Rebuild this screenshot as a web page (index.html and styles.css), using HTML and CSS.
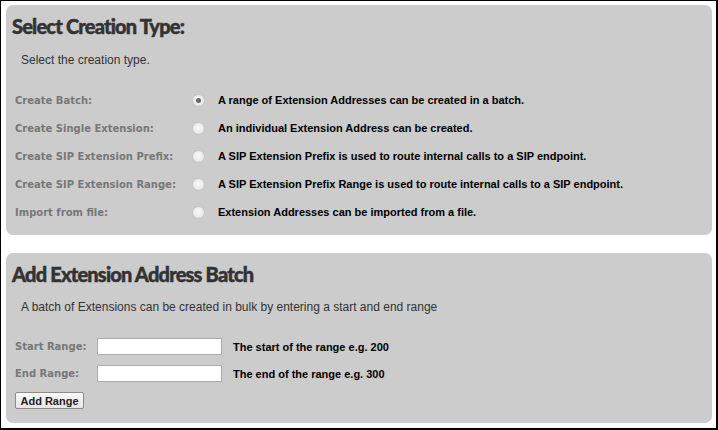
FILE: index.html
```html
<!DOCTYPE html>
<html>
<head>
<meta charset="utf-8">
<link rel="stylesheet" href="styles.css">
</head>
<body>
<div class="frame">
  <section class="panel panel-type">
    <h2 class="title">Select Creation Type:</h2>
    <p class="intro">Select the creation type.</p>
    <div class="options">
      <div class="opt">
        <span class="lbl">Create Batch:</span>
        <span class="radio checked"></span>
        <span class="desc">A range of Extension Addresses can be created in a batch.</span>
      </div>
      <div class="opt">
        <span class="lbl">Create Single Extension:</span>
        <span class="radio"></span>
        <span class="desc">An individual Extension Address can be created.</span>
      </div>
      <div class="opt">
        <span class="lbl">Create SIP Extension Prefix:</span>
        <span class="radio"></span>
        <span class="desc">A SIP Extension Prefix is used to route internal calls to a SIP endpoint.</span>
      </div>
      <div class="opt">
        <span class="lbl">Create SIP Extension Range:</span>
        <span class="radio"></span>
        <span class="desc">A SIP Extension Prefix Range is used to route internal calls to a SIP endpoint.</span>
      </div>
      <div class="opt">
        <span class="lbl">Import from file:</span>
        <span class="radio"></span>
        <span class="desc">Extension Addresses can be imported from a file.</span>
      </div>
    </div>
  </section>
  <section class="panel panel-batch">
    <h2 class="title">Add Extension Address Batch</h2>
    <p class="intro">A batch of Extensions can be created in bulk by entering a start and end range</p>
    <div class="fields">
      <div class="field">
        <span class="lbl">Start Range:</span>
        <span class="input"></span>
        <span class="desc">The start of the range e.g. 200</span>
      </div>
      <div class="field">
        <span class="lbl">End Range:</span>
        <span class="input"></span>
        <span class="desc">The end of the range e.g. 300</span>
      </div>
    </div>
    <button class="btn">Add Range</button>
  </section>
</div>
</body>
</html>
```

FILE: styles.css
```css
html, body {
  margin: 0;
  padding: 0;
  background: #fff;
}
.frame {
  box-sizing: border-box;
  width: 718px;
  height: 430px;
  border-style: solid;
  border-color: #000;
  border-width: 1px 2px 2px 1px;
  padding: 4px 4px 0 5px;
  display: flex;
  flex-direction: column;
  gap: 18px;
}
.panel {
  background: #cccccc;
  border-radius: 7px;
  box-sizing: border-box;
  padding-left: 6px;
}
.panel-type {
  height: 230px;
  padding-top: 9px;
}
.panel-batch {
  height: 170px;
  padding-top: 9px;
}
.title {
  margin: 0;
  font-family: Lato, "Open Sans", sans-serif;
  font-weight: 900;
  font-size: 20px;
  line-height: 24px;
  letter-spacing: -0.8px;
  color: #333;
  -webkit-text-stroke: 0.45px #333;
}
.intro {
  margin: 15px 0 0 9px;
  font-family: "Liberation Sans", Arial, sans-serif;
  font-size: 12px;
  line-height: 14px;
  color: #333;
}
.panel-batch .intro {
  margin-top: 14px;
}
.options {
  margin-top: 26px;
  display: flex;
  flex-direction: column;
  gap: 14px;
}
.opt {
  display: flex;
  align-items: center;
  height: 14px;
}
.lbl {
  font-family: "DejaVu Sans", Verdana, sans-serif;
  font-weight: 700;
  font-size: 10px;
  color: #777;
  padding-left: 3px;
  box-sizing: border-box;
}
.opt .lbl { width: 180px; }
.radio {
  box-sizing: border-box;
  width: 13px;
  height: 13px;
  border-radius: 50%;
  border: 1px solid #c6c6c6;
  background: radial-gradient(circle at 50% 40%, #f8f8f8 0%, #ececec 55%, #dedede 100%);
  margin-right: 13px;
  position: relative;
  flex: none;
}
.radio.checked::after {
  content: "";
  position: absolute;
  left: 3px;
  top: 3px;
  width: 5px;
  height: 5px;
  border-radius: 50%;
  background: #666;
}
.desc {
  font-family: "Liberation Sans", Arial, sans-serif;
  font-weight: 700;
  font-size: 11px;
  color: #000;
}
.fields {
  margin-top: 24px;
  display: flex;
  flex-direction: column;
  gap: 10px;
}
.field {
  display: flex;
  align-items: center;
  height: 17px;
}
.field .lbl { width: 85px; }
.input {
  box-sizing: border-box;
  width: 125px;
  height: 17px;
  background: #fff;
  border: 1px solid #a9a9a9;
  margin-right: 11px;
}
.btn {
  display: block;
  margin: 10px 0 0 3px;
  box-sizing: border-box;
  width: 69px;
  height: 17px;
  padding: 0;
  font-family: "Liberation Sans", Arial, sans-serif;
  font-weight: 700;
  font-size: 11px;
  color: #222;
  background: linear-gradient(#f8f8f8, #e6e6e6);
  border: 1px solid #8c8c8c;
  border-radius: 2px;
}
```
